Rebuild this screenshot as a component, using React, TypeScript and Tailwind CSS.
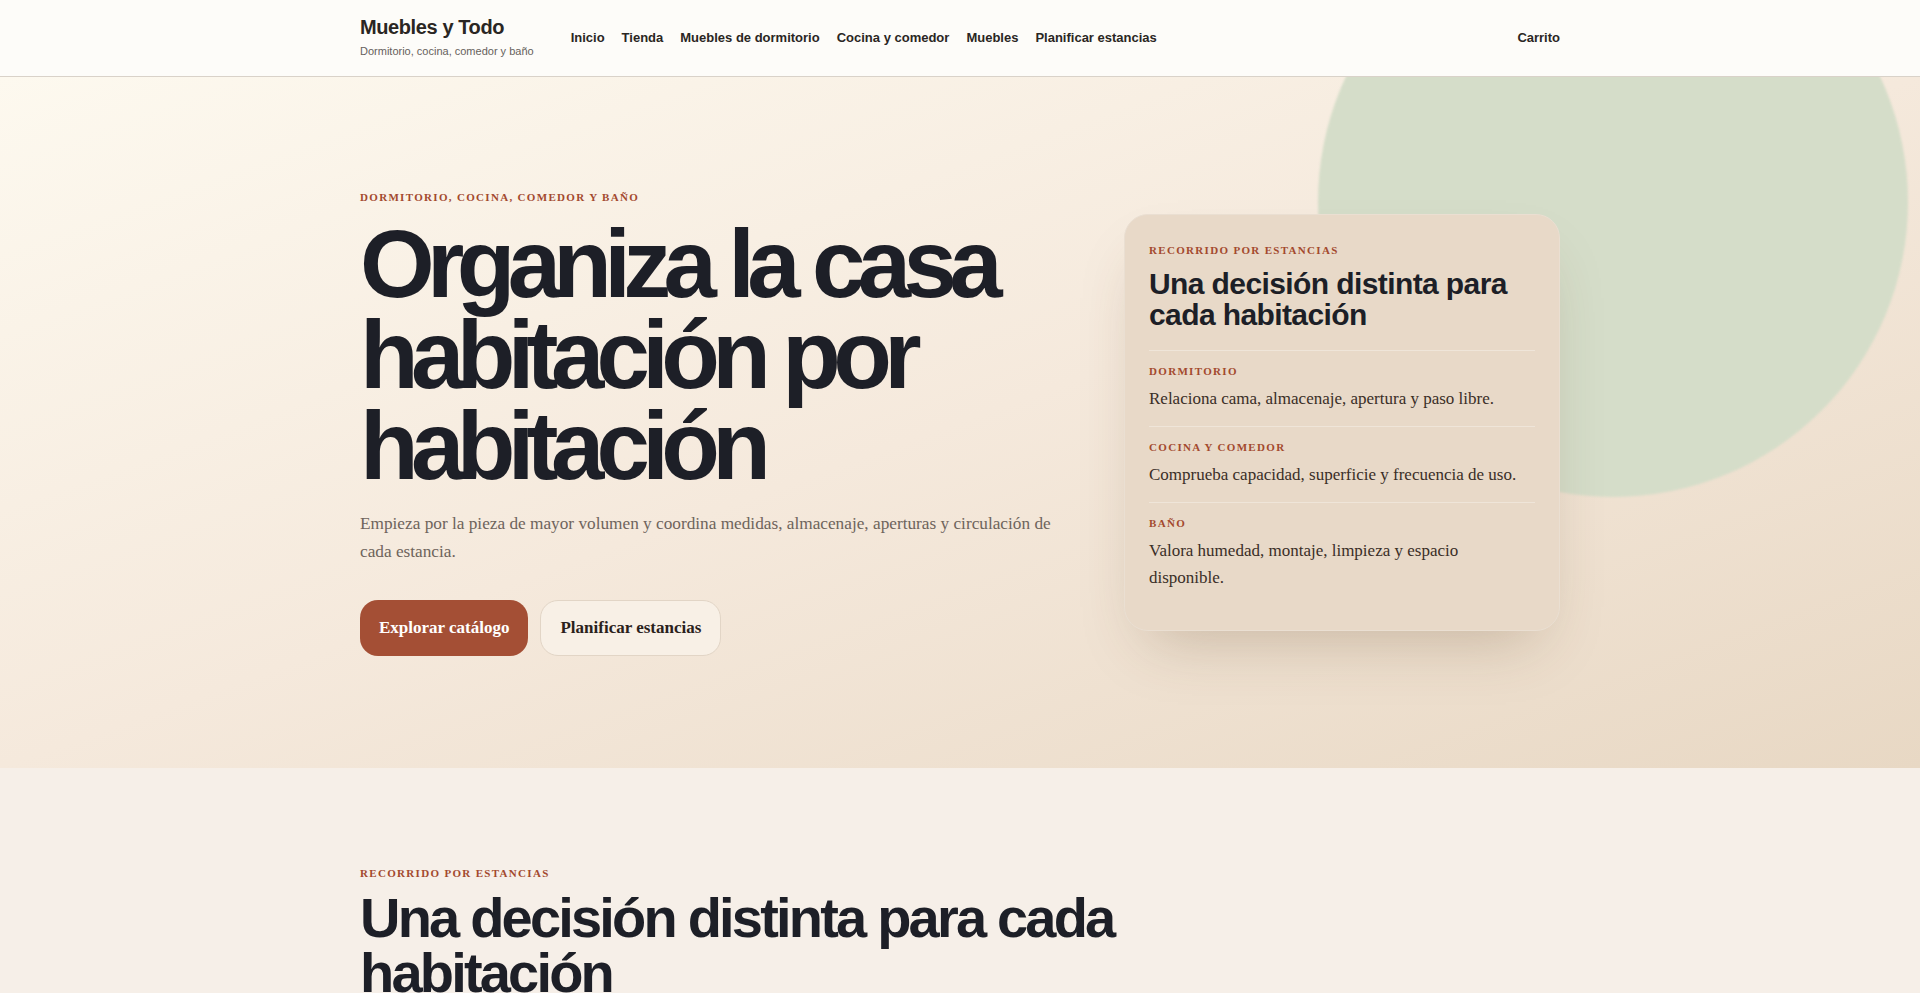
const serif = "font-['Liberation_Serif','Times_New_Roman',serif]";
const sans = "font-['Liberation_Sans',Arial,sans-serif]";

const navLinks = ['Inicio', 'Tienda', 'Muebles de dormitorio', 'Cocina y comedor', 'Muebles', 'Planificar estancias'];

const rooms = [
  { label: 'Dormitorio', text: 'Relaciona cama, almacenaje, apertura y paso libre.' },
  { label: 'Cocina y comedor', text: 'Comprueba capacidad, superficie y frecuencia de uso.' },
  { label: 'Baño', text: 'Valora humedad, montaje, limpieza y espacio disponible.' },
];

function Eyebrow({ children, className = '' }: { children: React.ReactNode; className?: string }) {
  return (
    <p className={`${serif} text-[11px] leading-4 font-bold uppercase tracking-[0.12em] text-[#a3492e] ${className}`}>
      {children}
    </p>
  );
}

function Header() {
  return (
    <header className={`${sans} relative z-10 bg-[#fdfcf9] border-b border-[#d9d2c9]`}>
      <div className="max-w-[1200px] mx-auto h-[76px] flex items-center">
        <div className="flex flex-col gap-[4px] -mt-[3px]">
          <span className="text-[20px] leading-6 font-bold tracking-[-0.02em] text-[#2a2623]">Muebles y Todo</span>
          <span className="text-[11px] leading-4 text-[#66615c]">Dormitorio, cocina, comedor y baño</span>
        </div>
        <nav className="flex items-center gap-[17px] ml-[37px]">
          {navLinks.map((l) => (
            <a key={l} href="#" className="text-[13px] font-bold text-[#2a2623]">
              {l}
            </a>
          ))}
        </nav>
        <a href="#" className="ml-auto text-[13px] font-bold text-[#2a2623]">
          Carrito
        </a>
      </div>
    </header>
  );
}

function RoomCard() {
  return (
    <div className="rounded-[24px] border border-[#eadfd2] bg-[#e8d9c8] px-6 pt-[27px] pb-[25px] shadow-[0_30px_60px_-24px_rgba(90,60,30,0.28)]">
      <Eyebrow>Recorrido por estancias</Eyebrow>
      <h2 className={`${sans} mt-[10px] mb-[20px] text-[30px] leading-[31px] font-bold tracking-[-0.02em] text-[#1d1f27]`}>
        Una decisión distinta para cada habitación
      </h2>
      <div>
        {rooms.map((r) => (
          <div key={r.label} className="border-t border-[#efe5d9] pt-[12px] pb-[14px]">
            <Eyebrow className="mb-[6px]">{r.label}</Eyebrow>
            <p className={`${serif} text-[17px] leading-[27px] text-[#3a2e27]`}>{r.text}</p>
          </div>
        ))}
      </div>
    </div>
  );
}

function Hero() {
  return (
    <section className="relative overflow-hidden bg-gradient-to-br from-[#fdf9ef] via-[#f5e9dc] to-[#e8d8c4]">
      <div className="absolute left-[1318px] top-[-170px] w-[590px] h-[590px] rounded-full bg-[#d5ddc9] blur-[1px]" />
      <div className="relative max-w-[1200px] mx-auto py-[112px] grid grid-cols-[1fr_436px] gap-[60px] items-center">
        <div>
          <Eyebrow>Dormitorio, cocina, comedor y baño</Eyebrow>
          <h1 className={`${sans} mt-[13px] text-[96px] leading-[91px] font-bold tracking-[-0.08em] text-[#1d1f27]`}>
            Organiza la casa
            <br />
            habitación por
            <br />
            habitación
          </h1>
          <p className={`${serif} mt-[19px] max-w-[705px] text-[17.25px] leading-[28px] text-[#6e645c]`}>
            Empieza por la pieza de mayor volumen y coordina medidas, almacenaje, aperturas y circulación de cada estancia.
          </p>
          <div className="mt-[34px] flex gap-3">
            <a
              href="#"
              className={`${serif} h-14 px-[19px] inline-flex items-center rounded-[18px] bg-[#a44f35] text-[17px] font-bold text-white`}
            >
              Explorar catálogo
            </a>
            <a
              href="#"
              className={`${serif} h-14 px-[19px] inline-flex items-center rounded-[18px] border border-[#e2d5c6] bg-[#f8f0e6] text-[17px] font-bold text-[#2a211b]`}
            >
              Planificar estancias
            </a>
          </div>
        </div>
        <RoomCard />
      </div>
    </section>
  );
}

function RoomsSection() {
  return (
    <section className="bg-[#f6efe8]">
      <div className="max-w-[1200px] mx-auto pt-[97px] pb-24">
        <Eyebrow>Recorrido por estancias</Eyebrow>
        <h2 className={`${sans} mt-[9px] max-w-[820px] text-[56px] leading-[55px] font-bold tracking-[-0.05em] text-[#1d1f27]`}>
          Una decisión distinta para cada habitación
        </h2>
      </div>
    </section>
  );
}

export default function App() {
  return (
    <div className="min-h-screen bg-[#f6efe8]">
      <Header />
      <Hero />
      <RoomsSection />
    </div>
  );
}
